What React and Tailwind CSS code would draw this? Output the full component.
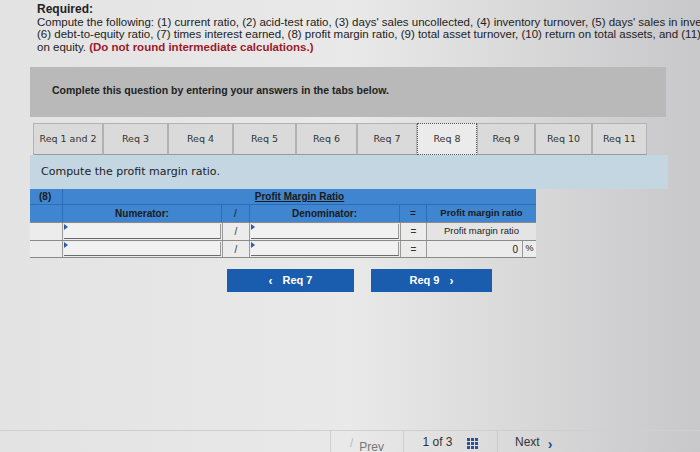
import React from "react";

const tabs = [
  { label: "Req 1 and 2", w: "w-[70px]" },
  { label: "Req 3", w: "w-[65px]" },
  { label: "Req 4", w: "w-[65px]" },
  { label: "Req 5", w: "w-[63px]" },
  { label: "Req 6", w: "w-[61px]" },
  { label: "Req 7", w: "w-[60px]" },
  { label: "Req 8", w: "w-[60px]", active: true },
  { label: "Req 9", w: "w-[58px]" },
  { label: "Req 10", w: "w-[57px]" },
  { label: "Req 11", w: "w-[55px]" },
];

const InputCell = ({ w }) => (
  <div className={`${w} h-full p-[1px]`}>
    <div className="relative h-full bg-[#f1f1f1] border-b border-[#6b6b6b] border-r border-r-[#9a9a9a]">
      <span className="absolute left-0 top-0 w-0 h-0 border-t-[3px] border-b-[3px] border-l-[4px] border-t-transparent border-b-transparent border-l-[#2d5f9e]" />
    </div>
  </div>
);

const App = () => {
  return (
    <div className="w-[700px] h-[452px] overflow-hidden bg-gradient-to-r from-[#e3e3e3] via-[#e9e9e9] to-[#c8c8ca] font-['Liberation_Sans',Arial,sans-serif] text-[#222] flex flex-col">
      <div className="pl-[37px] pt-[3px] text-[11.5px] leading-[12.5px]">
        <div className="font-bold text-[12px]">Required:</div>
        <div className="whitespace-nowrap">
          Compute the following: (1) current ratio, (2) acid-test ratio, (3) days' sales uncollected, (4) inventory turnover, (5) days' sales in inventory,
        </div>
        <div className="whitespace-nowrap">
          (6) debt-to-equity ratio, (7) times interest earned, (8) profit margin ratio, (9) total asset turnover, (10) return on total assets, and (11) return
        </div>
        <div className="whitespace-nowrap">
          on equity. <span className="font-bold text-[#a0182a]">(Do not round intermediate calculations.)</span>
        </div>
      </div>

      <div className="ml-[30px] mt-[14px] w-[636px] h-[50px] bg-[#b9b9ba] flex items-center pl-[22px] pb-[2px]">
        <span className="font-bold text-[10.5px] text-[#222]">Complete this question by entering your answers in the tabs below.</span>
      </div>

      <div className="ml-[30px] mt-[6px] w-[638px] flex flex-col">
        <div className="flex items-end pl-[3px] h-[32px] font-['DejaVu_Sans',Verdana,sans-serif] text-[9.5px] text-[#333]">
          {tabs.map((t) => (
            <div
              key={t.label}
              className={`${t.w} h-full flex items-center justify-center ${
                t.active
                  ? "bg-[#ebebeb] border border-dotted border-[#555]"
                  : "bg-[#dadada] border border-[#b2b2b2] border-b-[#9a9a9a]"
              }`}
            >
              {t.label}
            </div>
          ))}
        </div>
        <div className="h-[34px] bg-[#c4d6e2] flex items-center pl-[11px] font-['DejaVu_Sans',Verdana,sans-serif] text-[11px] text-[#222]">
          Compute the profit margin ratio.
        </div>
      </div>

      <div className="ml-[30px] w-[506px] flex flex-col text-[10px]">
        <div className="flex h-[15px] bg-[#3f85d0] text-[#1a1a1a] font-bold">
          <div className="w-[33px] flex items-center pl-[9px] border-r border-[#2b6db6]">(8)</div>
          <div className="flex-1 flex items-center justify-center underline">Profit Margin Ratio</div>
        </div>
        <div className="flex h-[18px] bg-[#3f85d0] text-[#1a1a1a] font-bold border-t border-[#2b6db6]">
          <div className="w-[33px] border-r border-[#2b6db6]" />
          <div className="w-[159px] flex items-center justify-center border-r border-[#2b6db6]">Numerator:</div>
          <div className="w-[28px] flex items-center justify-center border-r border-[#2b6db6] font-normal">/</div>
          <div className="w-[150px] flex items-center justify-center border-r border-[#2b6db6]">Denominator:</div>
          <div className="w-[27px] flex items-center justify-center border-r border-[#2b6db6] font-normal">=</div>
          <div className="flex-1 flex items-center justify-center text-[9.5px]">Profit margin ratio</div>
        </div>
        <div className="flex h-[18px] bg-[#ececec] border-t border-[#8a8a8a]">
          <div className="w-[33px] border-r border-[#9a9a9a]" />
          <InputCell w="w-[159px]" />
          <div className="w-[28px] flex items-center justify-center border-x border-[#9a9a9a] text-[#333]">/</div>
          <InputCell w="w-[150px]" />
          <div className="w-[27px] flex items-center justify-center border-x border-[#9a9a9a] text-[#333]">=</div>
          <div className="flex-1 flex items-center justify-center text-[9.5px] text-[#222] bg-[#e4e4e4]">Profit margin ratio</div>
        </div>
        <div className="flex h-[18px] bg-[#ececec] border-y border-[#8a8a8a]">
          <div className="w-[33px] border-r border-[#9a9a9a]" />
          <InputCell w="w-[159px]" />
          <div className="w-[28px] flex items-center justify-center border-x border-[#9a9a9a] text-[#333]">/</div>
          <InputCell w="w-[150px]" />
          <div className="w-[27px] flex items-center justify-center border-x border-[#9a9a9a] text-[#333]">=</div>
          <div className="flex-1 flex items-center justify-end pr-[4px] text-[#222]">0</div>
          <div className="w-[14px] flex items-center justify-center border-l border-[#9a9a9a] text-[9px] text-[#222]">%</div>
        </div>
      </div>

      <div className="flex gap-[17px] ml-[227px] mt-[11px]">
        <button className="w-[127px] h-[23px] bg-[#1a5cad] text-white font-bold text-[11px] flex items-center justify-center gap-[10px]">
          <span className="text-[12px]">&lsaquo;</span>
          <span>Req 7</span>
        </button>
        <button className="w-[121px] h-[23px] bg-[#1a5cad] text-white font-bold text-[11px] flex items-center justify-center gap-[10px]">
          <span>Req 9</span>
          <span className="text-[12px]">&rsaquo;</span>
        </button>
      </div>

      <div className="flex-1" />

      <div className="h-[22px] border-t border-[#cfcfcf] flex items-end text-[12px] text-[#333]">
        <div className="w-[330px] h-full" />
        <div className="w-[73px] h-full border-l border-[#d0d0d0] flex items-end justify-center gap-[6px] pb-0 text-[#777]">
          <span className="text-[#bbb]">/</span>
          <span className="translate-y-[4px]">Prev</span>
        </div>
        <div className="w-[94px] h-full border-l border-[#d0d0d0] flex items-end justify-center gap-[14px] pb-[1px]">
          <span>1 of 3</span>
          <svg width="12" height="12" viewBox="0 0 12 12" className="mb-[1px]">
            {[0, 4, 8].map((y) =>
              [0, 4, 8].map((x) => <rect key={`${x}-${y}`} x={x} y={y} width="3" height="3" fill="#2d4f9a" />)
            )}
          </svg>
        </div>
        <div className="h-full border-l border-[#c8c8c8] flex items-end pl-[17px] gap-[8px] pb-[1px]">
          <span>Next</span>
          <span className="text-[#1f4e99] font-bold text-[14px] leading-[14px]">&rsaquo;</span>
        </div>
      </div>
    </div>
  );
};

export default App;
